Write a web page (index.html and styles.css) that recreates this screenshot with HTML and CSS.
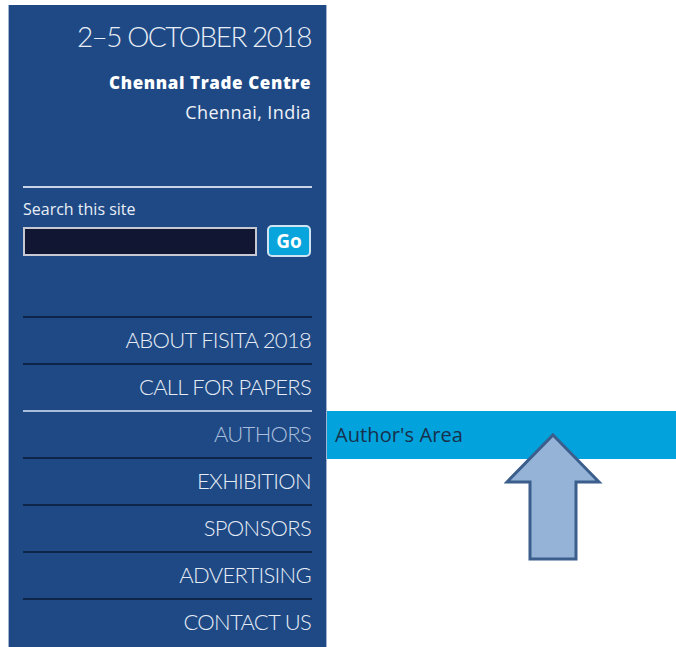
FILE: index.html
```html
<!DOCTYPE html>
<html lang="en">
<head>
<meta charset="utf-8">
<title>FISITA 2018</title>
<link rel="stylesheet" href="styles.css">
</head>
<body>
<aside class="sidebar">
  <div class="event">
    <p class="event-date">2–5 OCTOBER 2018</p>
    <p class="event-venue">Chennai Trade Centre</p>
    <p class="event-city">Chennai, India</p>
  </div>

  <form class="search">
    <label class="search-label" for="q">Search this site</label>
    <div class="search-row">
      <input class="search-input" id="q" type="text">
      <button class="search-go" type="button">Go</button>
    </div>
  </form>

  <nav class="nav">
    <ul class="nav-list">
      <li class="nav-item"><a href="#">ABOUT FISITA 2018</a></li>
      <li class="nav-item"><a href="#">CALL FOR PAPERS</a></li>
      <li class="nav-item nav-item--open">
        <a href="#">AUTHORS</a>
        <ul class="submenu">
          <li><a href="#">Author's Area</a></li>
        </ul>
      </li>
      <li class="nav-item"><a href="#">EXHIBITION</a></li>
      <li class="nav-item"><a href="#">SPONSORS</a></li>
      <li class="nav-item"><a href="#">ADVERTISING</a></li>
      <li class="nav-item"><a href="#">CONTACT US</a></li>
    </ul>
  </nav>
</aside>

<svg class="pointer" width="100" height="132" viewBox="0 0 100 132">
  <polygon points="49,3 95,50 72,50 72,127 26,127 26,50 3,50"
           fill="#95b3d7" stroke="#3b5e8c" stroke-width="3" stroke-linejoin="miter"/>
</svg>
</body>
</html>
```

FILE: styles.css
```css
html, body {
  margin: 0;
  padding: 0;
  background: #ffffff;
  height: 100%;
  overflow: hidden;
}

body {
  padding: 5px 0 0 8px;
  font-family: "Lato", "Open Sans", sans-serif;
  position: relative;
}

.sidebar {
  box-sizing: border-box;
  width: 319px;
  height: 642px;
  background: #1e4984;
  border-left: 1px solid #9fb2cf;
  border-right: 1px solid #9fb2cf;
  padding: 0 14px 0 14px;
  color: #ffffff;
}

/* event summary block */
.event {
  text-align: right;
  padding: 14px 1px 0 0;
  height: 181px;
  box-sizing: border-box;
}

.event p {
  margin: 0;
}

.event-date {
  font-size: 28px;
  font-weight: 300;
  line-height: 34px;
  letter-spacing: -1.5px;
  color: #e9eef6;
}

.event-venue {
  font-family: "Open Sans", sans-serif;
  font-size: 17px;
  font-weight: 800;
  line-height: 22px;
  letter-spacing: 0.6px;
  margin-top: 19px !important;
}

.event-city {
  font-family: "Open Sans", sans-serif;
  font-size: 18px;
  line-height: 24px;
  letter-spacing: 0.4px;
  margin-top: 6px !important;
  color: #eef2f8;
}

/* site search */
.search {
  border-top: 2px solid #c9d4e6;
  padding-top: 12px;
  height: 130px;
  box-sizing: border-box;
}

.search-label {
  display: block;
  font-family: "Open Sans", sans-serif;
  font-size: 16px;
  line-height: 18px;
  color: #e8eef7;
}

.search-row {
  display: flex;
  align-items: flex-end;
  gap: 10px;
  margin-top: 7px;
}

.search-input {
  box-sizing: border-box;
  width: 234px;
  height: 29px;
  margin: 0;
  background: #111633;
  border: 2px solid #c6c9d2;
  border-radius: 0;
}

.search-go {
  box-sizing: border-box;
  width: 44px;
  height: 32px;
  margin: 0 0 -1px 0;
  padding: 0;
  background: #08a4dc;
  color: #ffffff;
  border: 2px solid #cfe4f3;
  border-radius: 5px;
  font-family: "Open Sans", sans-serif;
  font-size: 19px;
  font-weight: 700;
  line-height: 26px;
}

/* main navigation */
.nav-list {
  list-style: none;
  margin: 0;
  padding: 0;
}

.nav-item {
  position: relative;
  border-top: 2px solid #0e2448;
  height: 47px;
  box-sizing: border-box;
  text-align: right;
}

.nav-item > a {
  display: block;
  padding-right: 1px;
  line-height: 44px;
  font-size: 22px;
  font-weight: 300;
  letter-spacing: -0.7px;
  color: #e6ecf5;
  text-decoration: none;
}

.nav-item--open {
  border-top-color: #a7bddb;
}

.nav-item--open > a {
  color: #a9bfdd;
}

.submenu {
  position: absolute;
  top: -1px;
  left: calc(100% + 15px);
  width: 350px;
  height: 48px;
  margin: 0;
  padding: 0 0 0 8px;
  list-style: none;
  background: #02a3dc;
  text-align: left;
  box-sizing: border-box;
}

.submenu a {
  display: block;
  line-height: 48px;
  font-family: "Open Sans", sans-serif;
  font-size: 20px;
  font-weight: 400;
  letter-spacing: 0.1px;
  color: #17304b;
  text-decoration: none;
}

.pointer {
  position: absolute;
  left: 504px;
  top: 432px;
}
```
